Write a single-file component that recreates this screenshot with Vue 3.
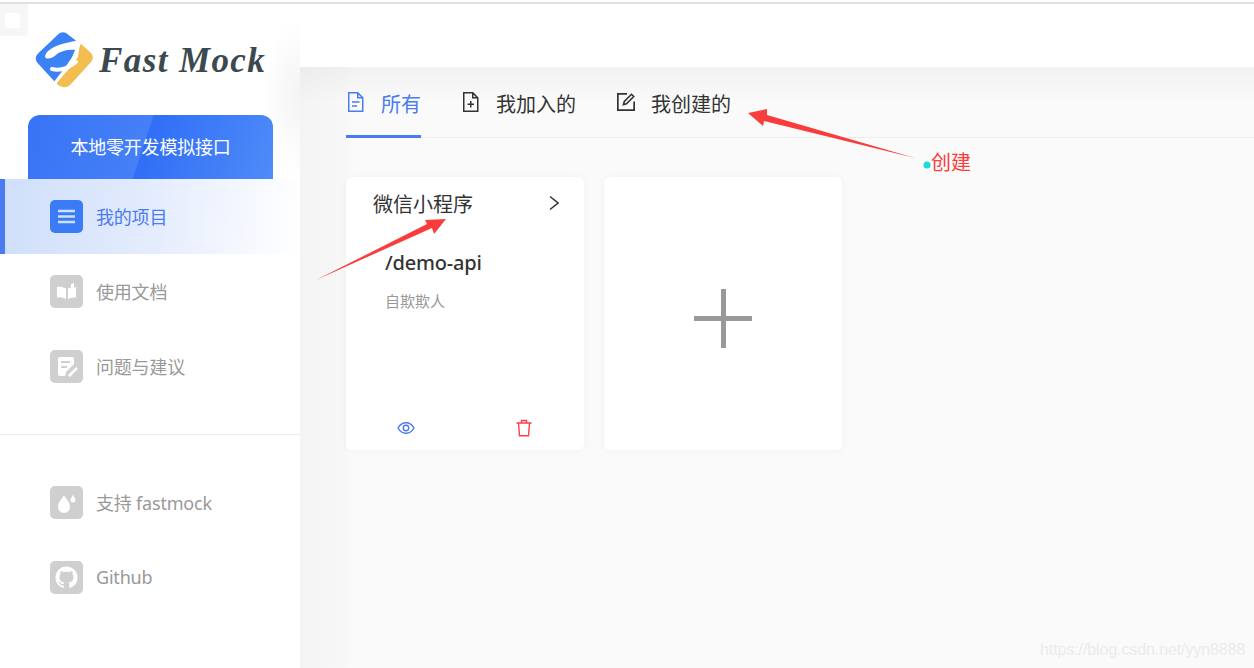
<template>
  <div class="page">
    <div class="top-line"></div>
    <div class="layout">
      <aside class="sidebar">
        <div class="corner"><span></span></div>
        <div class="logo">
          <svg class="logo-mark" viewBox="0 0 58 56">
            <path fill="#3b82f6" d="M23 2.500c3-3 7-3 10 0l13 10L20 50 3 31.500c-3-3-3-7 0-10z" />
            <path fill="#f4bd4f" d="M45 11l10 9c3.500 3 3.500 7 1 10L36 52c-3 3.500-8 4-11 2-2-1-3-2-4-3l13-14 9-12z" />
            <path fill="#fff" d="M10 25C11 16 26 11 46 8l-3 10C33 17 25 19 21 23c-3 3-9 5-11 2z" />
            <path fill="none" stroke="#fff" stroke-width="4" stroke-linecap="round" d="M17 37c7 2 15 0 24-7" />
            <path fill="none" stroke="#fff" stroke-width="3" d="M45 10l-8 19-17 22" />
          </svg>
          <span class="logo-text">Fast Mock</span>
        </div>
        <div class="promo">本地零开发模拟接口</div>
        <nav class="nav">
          <a class="nav-item active">
            <span class="nav-icon">
              <svg viewBox="0 0 33 33"><path fill="none" stroke="#cfe0fd" stroke-width="2.500" d="M8 11h17M8 16.500h17M8 22h17" /></svg>
            </span>
            <span class="nav-label">我的项目</span>
          </a>
          <a class="nav-item">
            <span class="nav-icon">
              <svg viewBox="0 0 33 33"><path fill="#fff" d="M7 12c3-.5 6 0 9 1.500V24c-3-1.500-6-2-9-1.500zM18 13.500l3-1V9l3-1v4.500l2-.5v10.500c-3 0-6 .5-8 1.500z" /></svg>
            </span>
            <span class="nav-label">使用文档</span>
          </a>
          <a class="nav-item">
            <span class="nav-icon">
              <svg viewBox="0 0 33 33">
                <path fill="#fff" d="M10 7h12a2 2 0 012 2v5l-8 8-1 4h-5a2 2 0 01-2-2V9a2 2 0 012-2z" />
                <path fill="none" stroke="#cfcfcf" stroke-width="2" d="M11 12h9M11 17h6" />
                <path fill="none" stroke="#fff" stroke-width="2.500" d="M19 26l8-8" />
              </svg>
            </span>
            <span class="nav-label">问题与建议</span>
          </a>
        </nav>
        <div class="divider"></div>
        <nav class="nav">
          <a class="nav-item">
            <span class="nav-icon">
              <svg viewBox="0 0 33 33">
                <path fill="#fff" d="M14 9c2 4 6 7 6 12a6 6 0 01-12 0c0-5 4-8 6-12z" />
                <path fill="#fff" d="M23 9c1 2 2.500 3 2.500 5a2.500 2.500 0 01-5 0c0-2 1.500-3 2.500-5z" />
              </svg>
            </span>
            <span class="nav-label">支持 fastmock</span>
          </a>
          <a class="nav-item">
            <span class="nav-icon">
              <svg viewBox="-4 -4 24 24"><path fill="#fff" d="M8 0C3.580 0 0 3.580 0 8c0 3.540 2.290 6.530 5.470 7.590.4.070.55-.17.55-.38 0-.19-.01-.82-.01-1.490-2.010.37-2.530-.49-2.690-.94-.09-.23-.48-.94-.82-1.130-.28-.15-.68-.52-.01-.53.63-.01 1.080.58 1.230.82.72 1.210 1.870.87 2.330.66.07-.52.28-.87.51-1.070-1.780-.2-3.640-.89-3.640-3.950 0-.87.31-1.590.82-2.150-.08-.2-.36-1.020.08-2.120 0 0 .67-.21 2.200.82.64-.18 1.320-.27 2-.27.68 0 1.360.09 2 .27 1.530-1.040 2.200-.82 2.200-.82.44 1.100.16 1.920.08 2.120.51.56.82 1.270.82 2.150 0 3.070-1.870 3.750-3.650 3.950.29.25.54.73.54 1.480 0 1.070-.01 1.930-.01 2.200 0 .21.15.46.55.38A8.013 8.013 0 0016 8c0-4.420-3.580-8-8-8z" /></svg>
            </span>
            <span class="nav-label">Github</span>
          </a>
        </nav>
      </aside>

      <main class="main">
        <header class="header"></header>
        <section class="content">
          <div class="tabs">
            <a class="tab active">
              <svg class="tab-icon" viewBox="0 0 20 20">
                <path fill="none" stroke="currentColor" stroke-width="1.500" d="M2.750.750h9l5 5v13.500h-14zM11.750.750v5h5M6 10h7.500M6 14h5" />
              </svg>
              <span class="tab-label">所有</span>
            </a>
            <a class="tab">
              <svg class="tab-icon" viewBox="0 0 20 20">
                <path fill="none" stroke="currentColor" stroke-width="1.500" d="M2.750.750h9l5 5v13.500h-14zM11.750.750v5h5M9.750 9v6.500M6.500 12.250h6.500" />
              </svg>
              <span class="tab-label">我加入的</span>
            </a>
            <a class="tab">
              <svg class="tab-icon" viewBox="0 0 20 20">
                <path fill="none" stroke="currentColor" stroke-width="1.700" d="M11 1.850H1.850v16.300h16.300V9.500" />
                <path fill="none" stroke="currentColor" stroke-width="1.600" d="M7.500 12.500l.8-3L15.500 2.300l2.200 2.200-7.200 7.200z" />
              </svg>
              <span class="tab-label">我创建的</span>
            </a>
          </div>

          <div class="cards">
            <div class="card">
              <div class="card-head">
                <span class="card-title">微信小程序</span>
                <svg class="chevron" viewBox="0 0 10 16"><path fill="none" stroke="#333" stroke-width="1.500" d="M1 1.500L9 8l-8 6.500" /></svg>
              </div>
              <div class="card-body">
                <div class="card-path">/demo-api</div>
                <div class="card-desc">自欺欺人</div>
              </div>
              <div class="card-foot">
                <svg class="foot-icon" viewBox="0 0 18 18">
                  <path fill="none" stroke="#4a7bea" stroke-width="1.400" d="M1 9c2-3.500 4.800-5.200 8-5.200s6 1.700 8 5.200c-2 3.500-4.800 5.200-8 5.200S3 12.500 1 9z" />
                  <circle cx="9" cy="9" r="2.700" fill="none" stroke="#4a7bea" stroke-width="1.400" />
                </svg>
                <svg class="foot-icon" viewBox="0 0 18 18">
                  <path fill="none" stroke="#f5414a" stroke-width="1.400" d="M1.500 4h15M3.500 4l1 12.800h9l1-12.800M6.500 4V1.500h5V4" />
                </svg>
              </div>
            </div>
            <div class="card add-card">
              <span class="plus"></span>
            </div>
          </div>
        </section>
      </main>
    </div>

    <!-- screenshot markup that lies over the page -->
    <svg class="marks" viewBox="0 0 1254 668">
      <polygon fill="#f93c3c" points="316,280 427,224 425,220 446,219 434,234 432,228" />
      <polygon fill="#f93c3c" points="748,113 767,109 767,115 915,158 764,121 763,126" />
      <circle cx="927" cy="165" r="3.500" fill="#1fd8d8" />
    </svg>
    <span class="note">创建</span>
    <span class="watermark">https://blog.csdn.net/yyn8888</span>
  </div>
</template>

<script setup>
</script>

<style>
html,
body {
  margin: 0;
  background: #fff;
}
</style>

<style scoped>
.page {
  position: relative;
  width: 1254px;
  height: 668px;
  overflow: hidden;
  padding-top: 2px;
  box-sizing: border-box;
  background: #fff;
  font-family: "Noto Sans", "Noto Sans CJK SC", sans-serif;
  color: #333;
}

.top-line {
  height: 2px;
  background: #dfdfe6;
}

.layout {
  display: flex;
  height: 664px;
}

/* sidebar */
.sidebar {
  position: relative;
  flex: 0 0 300px;
  background: radial-gradient(ellipse 40px 80px at 100% 14%, #f4f4f4, #fff);
  z-index: 1;
}

.corner {
  position: absolute;
  left: 0;
  top: 0;
  width: 28px;
  height: 32px;
  background: #f6f6f6;
  border-radius: 0 0 4px 0;
  display: flex;
  align-items: center;
  justify-content: center;
}

.corner span {
  width: 15px;
  height: 15px;
  margin-right: 3px;
  border-radius: 2px;
  background: #fff;
}

.logo {
  height: 111px;
  box-sizing: border-box;
  padding: 28px 0 0 35px;
  display: flex;
  align-items: flex-start;
  gap: 6px;
}

.logo-mark {
  width: 58px;
  height: 56px;
  flex-shrink: 0;
}

.logo-text {
  font-family: "Liberation Serif", serif;
  font-style: italic;
  font-weight: 700;
  font-size: 35px;
  line-height: 58px;
  letter-spacing: 1.400px;
  color: #3c4a50;
  white-space: nowrap;
}

.promo {
  width: 245px;
  height: 64px;
  margin-left: 28px;
  box-sizing: border-box;
  padding-bottom: 3px;
  border-radius: 12px 12px 0 0;
  background: linear-gradient(108deg, #3873f6 0, #4580f7 47%, #306ff6 47.500%, #4f8bf8 100%);
  color: #fff;
  font-size: 18px;
  letter-spacing: -0.2px;
  display: flex;
  align-items: center;
  justify-content: center;
}

.nav-item {
  height: 75px;
  box-sizing: border-box;
  padding-left: 50px;
  display: flex;
  align-items: center;
  gap: 13px;
  font-size: 18px;
  letter-spacing: -0.2px;
  color: #999;
}

.nav-label {
  margin-bottom: 2px;
}

.nav-item.active {
  border-left: 5px solid #4a7bf0;
  padding-left: 45px;
  color: #4a7bf0;
  background: linear-gradient(95deg, #cfdffa 0%, #e4ecfd 50%, #fff 100%);
}

.nav-icon {
  width: 33px;
  height: 33px;
  border-radius: 5px;
  background: #cfcfcf;
  flex-shrink: 0;
}

.nav-icon svg {
  display: block;
  width: 33px;
  height: 33px;
}

.active .nav-icon {
  background: #3b7bf6;
}

.divider {
  height: 1px;
  margin: 30px 0;
  background: #ececec;
}

/* main area */
.main {
  flex: 1;
  display: flex;
  flex-direction: column;
  min-width: 0;
}

.header {
  height: 63px;
  background: #fff;
}

.content {
  flex: 1;
  padding-left: 46px;
  background:
    linear-gradient(180deg, rgba(0, 0, 0, 0.035) 0, rgba(0, 0, 0, 0) 36px),
    linear-gradient(90deg, #f4f4f4 0, #f8f8f8 48px, #fafafa 48px);
}

.tabs {
  height: 71px;
  box-sizing: border-box;
  display: flex;
  gap: 40px;
  border-bottom: 1px solid #ececec;
}

.tab {
  height: 71px;
  box-sizing: border-box;
  padding-top: 3px;
  display: flex;
  align-items: center;
  gap: 15px;
  font-size: 20px;
  color: #333;
  border-bottom: 3px solid transparent;
}

.tab-label {
  margin-top: 1px;
}

.tab.active {
  color: #4a7bf0;
  border-bottom-color: #4a7bf0;
}

.tab-icon {
  width: 20px;
  height: 20px;
  margin-top: -1px;
}

.cards {
  display: flex;
  gap: 20px;
  margin-top: 39px;
}

.card {
  width: 238px;
  height: 273px;
  box-sizing: border-box;
  border-radius: 6px;
  background: #fff;
  box-shadow: 0 0 8px rgba(0, 0, 0, 0.04);
  display: flex;
  flex-direction: column;
}

.card-head {
  height: 54px;
  box-sizing: border-box;
  padding: 0 25px 0 27px;
  display: flex;
  align-items: center;
  justify-content: space-between;
  font-size: 20px;
  color: #333;
}

.card-title {
  margin-bottom: 2px;
}

.chevron {
  width: 10px;
  height: 16px;
  margin-top: -2px;
}

.card-body {
  flex: 1;
  padding: 17px 39px 0;
}

.card-path {
  font-size: 20px;
  font-weight: 500;
  line-height: 30px;
  letter-spacing: -0.2px;
  color: #333;
}

.card-desc {
  margin-top: 12px;
  font-size: 15px;
  line-height: 22px;
  color: #999;
}

.card-foot {
  height: 46px;
  box-sizing: border-box;
  padding: 0 51px;
  display: flex;
  align-items: center;
  justify-content: space-between;
}

.foot-icon {
  width: 18px;
  height: 18px;
  margin-top: 2px;
}

.add-card {
  align-items: center;
  justify-content: center;
  padding-top: 9px;
}

.plus {
  width: 58px;
  height: 59px;
  background:
    linear-gradient(#999, #999) center / 58px 5px no-repeat,
    linear-gradient(#999, #999) center / 5px 59px no-repeat;
}

/* overlays */
.marks {
  position: absolute;
  left: 0;
  top: 0;
  width: 1254px;
  height: 668px;
  z-index: 2;
  pointer-events: none;
}

.note {
  position: absolute;
  left: 931px;
  top: 149px;
  z-index: 2;
  font-size: 20px;
  line-height: 28px;
  color: #f93c3c;
}

.watermark {
  position: absolute;
  left: 1040px;
  top: 640px;
  z-index: 2;
  font-family: "Liberation Sans", sans-serif;
  font-size: 16px;
  line-height: 20px;
  letter-spacing: -0.1px;
  color: #ebebeb;
}
</style>
